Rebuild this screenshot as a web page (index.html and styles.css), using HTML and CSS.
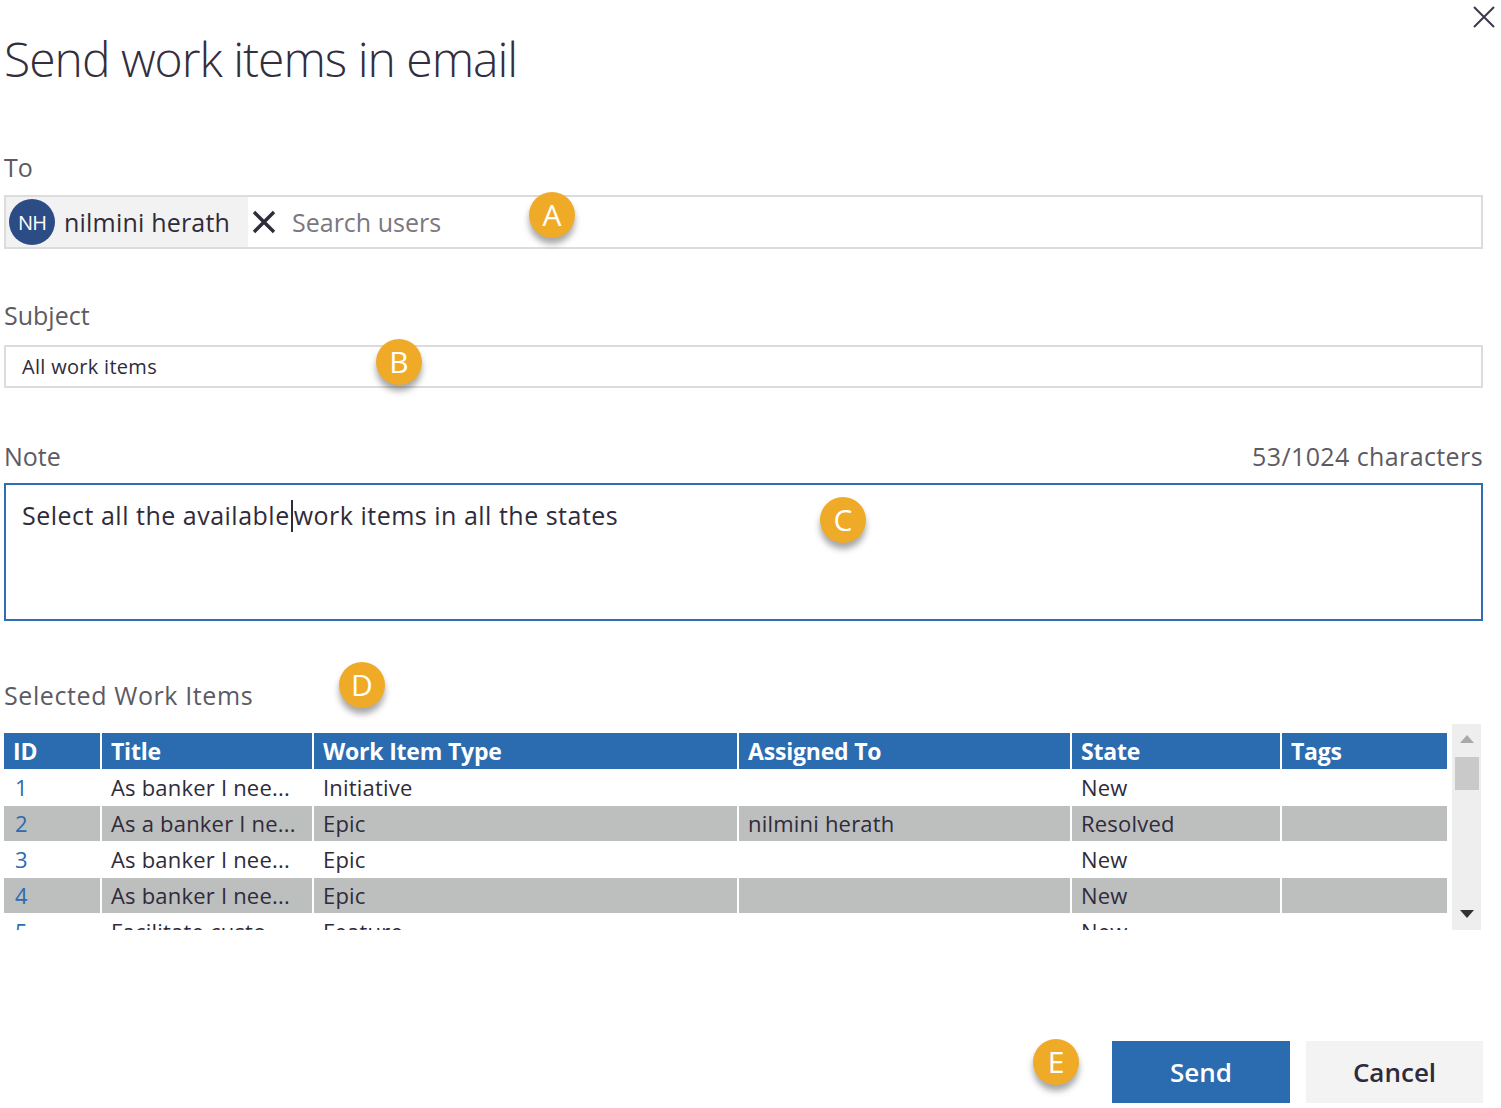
FILE: index.html
```html
<!DOCTYPE html>
<html>
<head>
<meta charset="utf-8">
<link rel="stylesheet" href="styles.css">
</head>
<body>
<div class="dialog">
  <button class="close" aria-label="Close">
    <svg width="22" height="22" viewBox="0 0 22 22"><path d="M1 1 L21 21 M21 1 L1 21" stroke="#3a3a4a" stroke-width="2" fill="none"/></svg>
  </button>
  <h1 class="title">Send work items in email</h1>

  <div class="label label-to">To</div>
  <div class="field field-to">
    <div class="chip">
      <span class="avatar">NH</span>
      <span class="chip-name">nilmini herath</span>
    </div>
    <span class="chip-x">
      <svg width="24" height="24" viewBox="0 0 24 24"><path d="M2 2 L22 22 M22 2 L2 22" stroke="#2f2b3a" stroke-width="3.4" fill="none"/></svg>
    </span>
    <span class="placeholder">Search users</span>
    <span class="badge badge-a">A</span>
  </div>

  <div class="label label-subject">Subject</div>
  <div class="field field-subject">
    <span class="subject-text">All work items</span>
    <span class="badge badge-b">B</span>
  </div>

  <div class="note-head">
    <span class="label">Note</span>
    <span class="counter">53/1024 characters</span>
  </div>
  <div class="field field-note">
    <span class="note-text">Select all the available<span class="caret"></span>work items in all the states</span>
    <span class="badge badge-c">C</span>
  </div>

  <div class="label label-selected">Selected Work Items<span class="badge badge-d">D</span></div>

  <div class="grid-area">
    <div class="grid-viewport">
      <div class="row head">
        <div class="cell">ID</div>
        <div class="cell">Title</div>
        <div class="cell">Work Item Type</div>
        <div class="cell">Assigned To</div>
        <div class="cell">State</div>
        <div class="cell">Tags</div>
      </div>
      <div class="row">
        <div class="cell id">1</div>
        <div class="cell">As banker I nee...</div>
        <div class="cell">Initiative</div>
        <div class="cell"></div>
        <div class="cell">New</div>
        <div class="cell"></div>
      </div>
      <div class="row alt">
        <div class="cell id">2</div>
        <div class="cell">As a banker I ne...</div>
        <div class="cell">Epic</div>
        <div class="cell">nilmini herath</div>
        <div class="cell">Resolved</div>
        <div class="cell"></div>
      </div>
      <div class="row">
        <div class="cell id">3</div>
        <div class="cell">As banker I nee...</div>
        <div class="cell">Epic</div>
        <div class="cell"></div>
        <div class="cell">New</div>
        <div class="cell"></div>
      </div>
      <div class="row alt">
        <div class="cell id">4</div>
        <div class="cell">As banker I nee...</div>
        <div class="cell">Epic</div>
        <div class="cell"></div>
        <div class="cell">New</div>
        <div class="cell"></div>
      </div>
      <div class="row">
        <div class="cell id">5</div>
        <div class="cell">Facilitate custo...</div>
        <div class="cell">Feature</div>
        <div class="cell"></div>
        <div class="cell">New</div>
        <div class="cell"></div>
      </div>
    </div>
    <div class="scrollbar">
      <span class="arrow-up"></span>
      <span class="thumb"></span>
      <span class="spacer"></span>
      <span class="arrow-down"></span>
    </div>
  </div>

  <div class="actions">
    <span class="badge badge-e">E</span>
    <button class="btn btn-primary">Send</button>
    <button class="btn btn-secondary">Cancel</button>
  </div>
</div>
</body>
</html>
```

FILE: styles.css
```css
* { box-sizing: border-box; }
html, body { margin: 0; padding: 0; background: #fff; }
body {
  font-family: "Open Sans", "Noto Sans", sans-serif;
  color: #2f2b3a;
  width: 1501px;
  height: 1108px;
  overflow: hidden;
}
.dialog {
  position: relative;
  display: flex;
  flex-direction: column;
  padding: 0 18px 0 4px;
  height: 1108px;
}
.close {
  position: absolute;
  top: 6px;
  right: 6px;
  border: 0;
  background: none;
  padding: 0;
  width: 22px;
  height: 22px;
}
.title {
  margin: 29px 0 0 0;
  font-size: 48px;
  line-height: 60px;
  font-weight: 300;
  color: #322e3e;
  letter-spacing: -1px;
}
.label {
  font-size: 25px;
  line-height: 30px;
  color: #5d5a63;
  position: relative;
}
.label-to { margin-top: 63px; }
.label-subject { margin-top: 51px; }
.label-selected { margin-top: 59px; letter-spacing: 0.6px; }

.field {
  position: relative;
  border: 2px solid #dcdcdc;
  display: flex;
  align-items: center;
}
.field-to {
  margin-top: 13px;
  height: 54px;
  padding: 0;
}
.chip {
  display: flex;
  align-items: center;
  background: #f2f2f2;
  height: 50px;
  padding: 0 0 0 3px;
  width: 242px;
}
.avatar {
  width: 46px;
  height: 46px;
  border-radius: 50%;
  background: #2c4c86;
  color: #fff;
  font-size: 20px;
  font-weight: 400;
  display: flex;
  align-items: center;
  justify-content: center;
  letter-spacing: -1px;
}
.chip-name {
  margin-left: 9px;
  font-size: 25px;
  color: #2f2b3a;
  letter-spacing: 0.2px;
}
.chip-x {
  display: flex;
  margin-left: 4px;
  width: 24px;
}
.placeholder {
  margin-left: 16px;
  font-size: 25px;
  color: #7a7780;
}
.field-subject {
  margin-top: 15px;
  height: 43px;
  padding-left: 16px;
}
.subject-text {
  font-size: 20px;
  letter-spacing: 0.3px;
  color: #2f2b3a;
}
.note-head {
  margin-top: 53px;
  display: flex;
  justify-content: space-between;
  align-items: baseline;
}
.counter {
  font-size: 25px;
  line-height: 30px;
  color: #5d5a63;
  letter-spacing: 0.4px;
}
.field-note {
  margin-top: 12px;
  height: 138px;
  border-color: #2f6db4;
  align-items: flex-start;
  padding: 13px 0 0 16px;
}
.note-text {
  font-size: 25px;
  line-height: 34px;
  color: #2f2b3a;
  letter-spacing: 0.5px;
}
.caret {
  display: inline-block;
  width: 2px;
  height: 32px;
  background: #2f2b3a;
  vertical-align: -7px;
  margin: 0 1px 0 1px;
}

.badge {
  position: absolute;
  width: 46px;
  height: 46px;
  border-radius: 50%;
  background: #efab27;
  color: #fff;
  font-size: 30px;
  font-weight: 400;
  line-height: 46px;
  text-align: center;
  letter-spacing: 0;
  box-shadow: 0 6px 6px rgba(60, 60, 60, 0.45);
}
.badge-a { left: 523px; top: -5px; }
.badge-b { left: 370px; top: -8px; }
.badge-c { left: 814px; top: 12px; }
.badge-d { left: 335px; top: -18px; }

.grid-area {
  margin-top: 14px;
  height: 206px;
  display: flex;
}
.grid-viewport {
  width: 1443px;
  overflow: hidden;
  padding-top: 9px;
}
.row {
  display: grid;
  grid-template-columns: 96px 210px 423px 331px 208px 165px;
  column-gap: 2px;
  height: 35px;
  margin-bottom: 1px;
}
.row .cell {
  padding-left: 9px;
  font-size: 22px;
  line-height: 35px;
  white-space: nowrap;
  overflow: hidden;
  color: #2f2b3a;
  letter-spacing: 0.2px;
}
.row.head { height: 36px; margin-bottom: 1px; }
.row.head .cell {
  background: #2b6cb0;
  color: #fff;
  font-weight: 700;
  font-size: 23px;
  line-height: 36px;
  letter-spacing: -0.2px;
}
.row.alt .cell { background: #bdbebe; }
.row .cell.id { color: #2b6cb0; padding-left: 11px; }

.scrollbar {
  margin-left: 5px;
  width: 29px;
  background: #eeeeee;
  display: flex;
  flex-direction: column;
  align-items: center;
  padding: 11px 0 12px;
}
.arrow-up {
  width: 0; height: 0;
  border-left: 7px solid transparent;
  border-right: 7px solid transparent;
  border-bottom: 8px solid #a9a9a9;
}
.thumb {
  margin-top: 14px;
  width: 24px;
  height: 33px;
  background: #c9c9c9;
}
.spacer { flex: 1; }
.arrow-down {
  width: 0; height: 0;
  border-left: 7px solid transparent;
  border-right: 7px solid transparent;
  border-top: 8px solid #333;
}

.actions {
  margin-top: 111px;
  display: flex;
  justify-content: flex-end;
  align-items: flex-start;
  gap: 16px;
  position: relative;
}
.actions .badge-e { position: absolute; left: 1029px; top: -2px; }
.btn {
  height: 62px;
  width: 178px;
  border: 0;
  font-family: "Open Sans", sans-serif;
  font-size: 26px;
  padding: 0;
}
.btn-primary {
  background: #2b6cb0;
  color: #fff;
  font-weight: 600;
}
.btn-secondary {
  width: 177px;
  background: #f3f3f3;
  color: #2f2b3a;
  font-weight: 600;
}
```
